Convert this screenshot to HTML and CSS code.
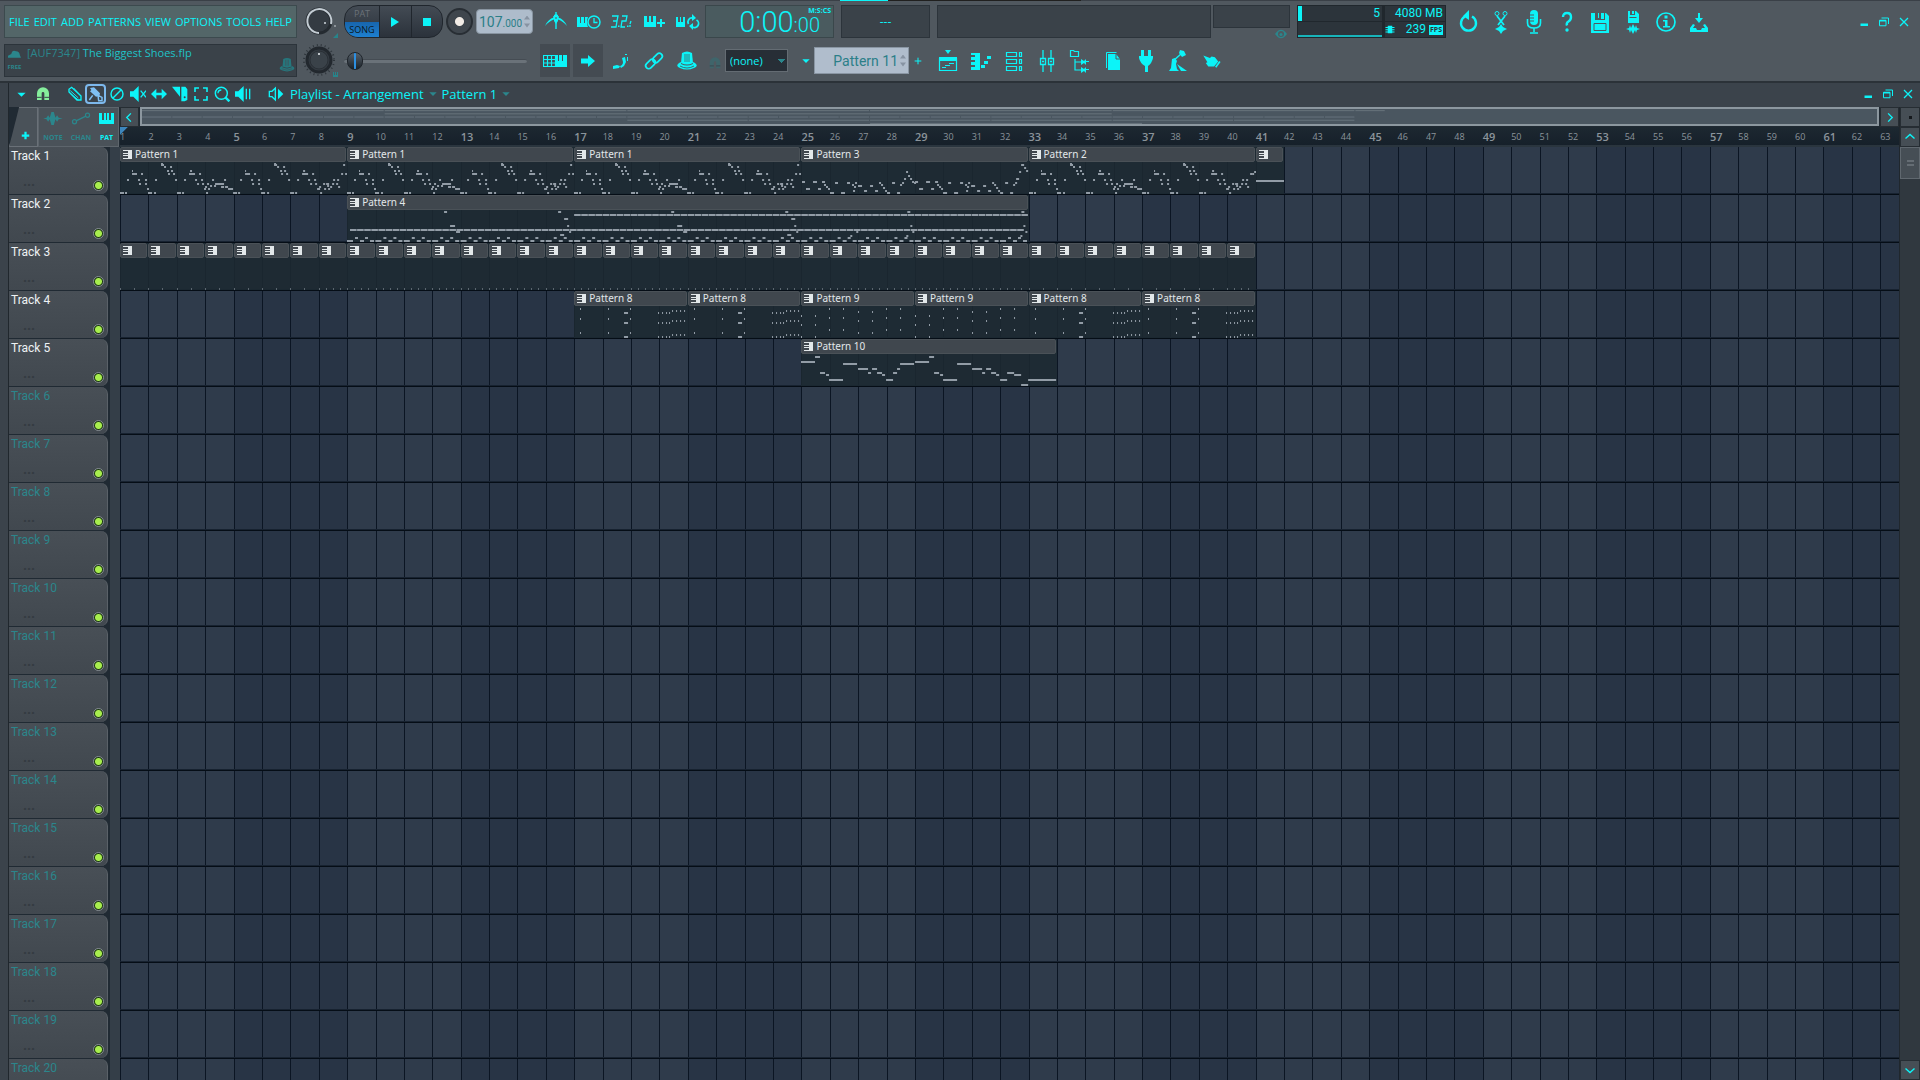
FILE: index.html
```html
<!DOCTYPE html>
<html lang="en">
<head>
  <meta charset="UTF-8">
  <meta name="viewport" content="width=device-width, initial-scale=1.0">
  <title>The Biggest Shoes.flp</title>
  <link rel="stylesheet" href="styles.css">
</head>
<body>
  <svg class="sprite" aria-hidden="true">
    <symbol id="i-metronome" viewBox="0 0 24 24"><path d="M1 16Q4 9 10 7.500V9.500Q5 11 1 16ZM23 16Q20 9 14 7.500V9.500Q19 11 23 16Z"/><path d="M10 5l2-1 2 1v6l-2 3-2-3z"/><path d="M12 12v7M9 7h6M12 2v3" stroke="currentColor" stroke-width="1.400"/><path d="M12 7v2" stroke="#50585f"/></symbol>
    <symbol id="i-wait" viewBox="0 0 24 24"><path d="M0 7h3v6h1V7h3v6h1V7h3q-2 5 0 10H0z"/><circle cx="17" cy="12" r="6" fill="none" stroke="currentColor" stroke-width="1.500"/><path d="M17 8v4.500h3.500" fill="none" stroke="currentColor" stroke-width="1.300"/></symbol>
    <symbol id="i-count" viewBox="0 0 24 24"><path d="M2 6h6l-1 5H3M7 11l-1 6H1M12 6h5l-1 5h-4l-1 6h4M21 11l-1 3M20 15l0 2" fill="none" stroke="currentColor" stroke-width="1.300"/><path d="M8 15.500h1.500V17H8zM17 15.500h1.500V17H17z"/></symbol>
    <symbol id="i-keysplus" viewBox="0 0 24 24"><path d="M1 6h3v6h2V6h2v6h2V6h3v11H1zM17 9h2v3h3v2h-3v3h-2v-3h-3v-2h3z"/></symbol>
    <symbol id="i-keysloop" viewBox="0 0 24 24"><path d="M0 7h2v5h2V7h1v5h2V7h2v10H0z"/><path d="M12.500 14a4 4 0 0 1 4-6M20.500 10a4 4 0 0 1-4 7" fill="none" stroke="currentColor" stroke-width="1.800"/><path d="M16 4l4 4-4 3zM17 20l-4-4 4-3z"/></symbol>
    <symbol id="i-pianogrid" viewBox="0 0 24 24"><path d="M.500 6.500h12v11H.500zM.500 10.500h12M.500 14h12M4.500 6v12M8.500 6v12" fill="none" stroke="currentColor" stroke-width="1.200"/><path d="M12 6h3v6h1V6h3v6h1V6h4v12H12z"/></symbol>
    <symbol id="i-arrow" viewBox="0 0 24 24"><path d="M5 9.500h7V6l7 6-7 6v-3.500H5z"/></symbol>
    <symbol id="i-step" viewBox="0 0 24 24"><path d="M4 17l4-1 3 1-1 2-6 1zM11 17q3-1 3-4l-1-4 3-1 1 5-2 4-3 2zM16 5h2v1h-2zM18 8h1v4h-1z"/></symbol>
    <symbol id="i-link" viewBox="0 0 24 24"><g fill="none" stroke="currentColor" stroke-width="1.700"><rect x="10" y="6" width="11" height="6" rx="3" transform="rotate(-45 15.500 9)"/><rect x="3" y="12" width="11" height="6" rx="3" transform="rotate(-45 8.500 15)"/></g></symbol>
    <symbol id="i-pot" viewBox="0 0 24 24"><path d="M7 4q5-3 10 0l1 10q-6 3-12 0z"/><path d="M10 5v8M12 5v8M14 5v8" stroke="#454d54" stroke-width=".700"/><path d="M4 14l2-1v2q6 3 12 0v-2l2 1q4 3-1 5-7 3-14 0-5-2-1-5z"/><path d="M5 17q7 4 14 0" fill="none" stroke="#454d54" stroke-width=".800"/></symbol>
    <symbol id="i-magnet" viewBox="0 0 24 24"><path d="M3 21V11a9 9 0 0 1 18 0v10h-7V11a2 2 0 0 0-4 0v10z"/><path d="M3 17h7M14 17h7" stroke="#3b434b" stroke-width="1.500"/></symbol>
    <symbol id="i-caret" viewBox="0 0 24 24"><path d="M1 7h22L12 18z"/></symbol>
    <symbol id="i-plus" viewBox="0 0 24 24"><path d="M2 12h20M12 2v20" stroke="currentColor" stroke-width="3"/></symbol>
    <symbol id="i-plusb" viewBox="0 0 24 24"><path d="M2 12h20M12 2v20" stroke="currentColor" stroke-width="6"/></symbol>
    <symbol id="i-playlist" viewBox="0 0 24 24"><path d="M9 1h6l-3 4z"/><path d="M3 8h18v4H3z"/><path d="M3.500 9v12.500h17V9M6 18.500h4M9 16.500h5M13 14.500h5" fill="none" stroke="currentColor" stroke-width="1.200"/></symbol>
    <symbol id="i-pianoroll" viewBox="0 0 24 24"><path d="M2 4h9v17H2v-3h4v-2H2v-3h4v-2H2V8h4V6H2zM12 16h4v3h-4zM15 12h4v3h-4zM18 7h4v3h-4z"/></symbol>
    <symbol id="i-rack" viewBox="0 0 24 24"><path d="M4.500 3.500h10v4h-10zM17.500 3.500h2v4h-2zM4.500 10.500h10v4h-10zM17.500 10.500h2v4h-2zM4.500 17.500h10v4h-10zM17.500 17.500h2v4h-2z" fill="none" stroke="currentColor" stroke-width="1.200"/></symbol>
    <symbol id="i-mixer" viewBox="0 0 24 24"><path d="M5.500 9.500h5v6h-5zM13.500 9.500h5v6h-5zM8 1v8M16 1v8M8 16v7M16 16v7M7 12.500h2M15 12.500h2" fill="none" stroke="currentColor" stroke-width="1.300"/></symbol>
    <symbol id="i-browser" viewBox="0 0 24 24"><path d="M2.500 1.500h3l1 1h4v5h-8zM7 10v11h6M7 13h6" fill="none" stroke="currentColor" stroke-width="1.200"/><path d="M13 10l3 2 2-2v2h3v1h-3v3l-2-2-3 2zM13 18l3 2 2-2v2h3v1h-3v3l-2-2-3 2z"/></symbol>
    <symbol id="i-picker" viewBox="0 0 24 24"><path d="M7 5h8l4 5v11H7z"/><path d="M5.500 19V3.500h10" fill="none" stroke="currentColor"/><path d="M15 5v5h4" fill="none" stroke="#50585f"/></symbol>
    <symbol id="i-plug" viewBox="0 0 24 24"><path d="M7 1h3v6H7zM14 1h3v6h-3zM5 7h14v2q-1 5-5 8v6h-3v-6q-5-3-6-8z"/></symbol>
    <symbol id="i-jack" viewBox="0 0 24 24"><path d="M13 1l4 1 2 4-4 2-3-4zM5 10l3-1 2 3-1 3 1 5 2 2H2l2-3zM10 15l10 7h-6z"/><path d="M14 5l-8 7" stroke="currentColor" stroke-width="1.500"/></symbol>
    <symbol id="i-hand" viewBox="-2 -3 29 29"><path d="M2 5l8 3 2-2 4 1 4 5-5 6-7 0-3-4 2-1z"/><path d="M22 12l-5 7" stroke="currentColor" stroke-width="2"/></symbol>
    <symbol id="i-undo" viewBox="0 0 24 24"><path d="M16 6.500a7.500 7.500 0 1 1-7 0" fill="none" stroke="currentColor" stroke-width="2.400"/><path d="M13 0v10L7 6z"/></symbol>
    <symbol id="i-cut" viewBox="0 0 24 24"><path d="M8 6l7 9M16 6l-7 9" stroke="currentColor" stroke-width="1.800"/><circle cx="8" cy="3.500" r="2" fill="none" stroke="currentColor"/><circle cx="16" cy="3.500" r="2" fill="none" stroke="currentColor"/><path d="M6 19l2-1 2-1 2-3 2 3 2 1 2 1-2 1-2 1-2 3-2-3-2-1z"/></symbol>
    <symbol id="i-mic" viewBox="0 0 24 24"><rect x="8" y="0" width="8" height="15" rx="4"/><path d="M8 5h4M8 8h4M8 11h4" stroke="#50585f"/><path d="M5.500 9v4q0 5 6.500 5t6.500-5V9M12 18v4M8 23h8" fill="none" stroke="currentColor" stroke-width="1.600"/></symbol>
    <symbol id="i-help" viewBox="0 0 24 24"><path d="M8 7q0-4 4-4t4 4q0 3-2.500 4.500t-1.500 4" fill="none" stroke="currentColor" stroke-width="2.400"/><circle cx="12" cy="20" r="1.700"/></symbol>
    <symbol id="i-save" viewBox="0 0 24 24"><path d="M3 3h4v7h10V3h1l3 3v17H3z"/><path d="M13 3h3v6h-3zM10 3h1v5h-1z"/><path d="M6 13.500h12v7H6z" fill="none" stroke="#50585f"/></symbol>
    <symbol id="i-savenew" viewBox="0 0 24 24"><path d="M7 1h2v4h5V1h1l3 3v9H7zM11 1h2v3h-2z"/><path d="M8.500 7.500h7" stroke="#50585f"/><path d="M5 19l3-1 1-3 1 3 2-4 2 4 1-3 1 3 3 1-3 1-1 3-1-3-2 4-2-4-1 3-1-3z"/></symbol>
    <symbol id="i-info" viewBox="0 0 24 24"><circle cx="12" cy="12" r="9" fill="none" stroke="currentColor" stroke-width="1.700"/><path d="M10.500 5.500h3v3h-3zM9 10h4.500v6H16v1.500H9V16h2v-4.500H9z"/></symbol>
    <symbol id="i-export" viewBox="0 0 24 24"><path d="M11 3h2v5h3l-4 5-4-5h3zM6 14l-3 4v4h18v-4l-3-4-2 1 2 3h-3l-1 2h-4l-1-2H6l2-3z"/></symbol>
    <symbol id="i-min" viewBox="0 0 24 24"><path d="M5 15h15v5H5z"/></symbol>
    <symbol id="i-restore" viewBox="0 0 24 24"><path d="M3 8.500h13v11H3zM7 4h14v12" fill="none" stroke="currentColor" stroke-width="2"/><path d="M3 8h13v3H3z"/></symbol>
    <symbol id="i-close" viewBox="0 0 24 24"><path d="M4 4l16 16M20 4L4 20" stroke="currentColor" stroke-width="2.500"/></symbol>
    <symbol id="i-eye" viewBox="0 0 24 24"><path d="M0 12Q12-5 24 12 12 29 0 12z"/><circle cx="12" cy="12" r="6" fill="#50585f"/><circle cx="12" cy="13" r="3"/></symbol>
    <symbol id="i-cloud" viewBox="0 0 24 24"><path d="M0 20v-4l6-3q2-9 9-5 6 0 7 7l2 5z"/></symbol>
    <symbol id="i-pencil" viewBox="0 0 24 24"><path d="M3 5l4-3 14 13v6h-6L3 9z" fill="none" stroke="currentColor" stroke-width="2"/><path d="M6 12L17 21M10 3l11 12M5 7l12 11" stroke="currentColor" stroke-width="1.400"/></symbol>
    <symbol id="i-brush" viewBox="0 0 24 24"><path d="M3 3l6-1 9 9-1 4-5 1-9-8 2-2z"/><path d="M2 21l5-7M15 14l6 3v5h-5z" fill="none" stroke="currentColor" stroke-width="2.200"/></symbol>
    <symbol id="i-no" viewBox="0 0 24 24"><circle cx="12" cy="12" r="9" fill="none" stroke="currentColor" stroke-width="2.200"/><path d="M18 6L6 18" stroke="currentColor" stroke-width="2.200"/></symbol>
    <symbol id="i-mute" viewBox="0 0 24 24"><path d="M0 8h5l8-8v24l-8-8H0z"/><path d="M16 7l8 10M24 7l-8 10" stroke="currentColor" stroke-width="2"/></symbol>
    <symbol id="i-slip" viewBox="0 0 24 24"><path d="M0 12l8-8v6h8V4l8 8-8 8v-6H8v6z"/></symbol>
    <symbol id="i-slice" viewBox="0 0 24 24"><path d="M0 1h12v15zM14 1h6l3 4v16l-4 2h-5z"/><circle cx="19" cy="17" r="1.500" fill="#3b434b"/></symbol>
    <symbol id="i-select" viewBox="0 0 24 24"><path d="M3 9V3h6M15 3h6v6M21 15v6h-6M9 21H3v-6" fill="none" stroke="currentColor" stroke-width="2.400"/></symbol>
    <symbol id="i-zoom" viewBox="0 0 24 24"><circle cx="11" cy="11" r="9" fill="none" stroke="currentColor" stroke-width="2.200"/><path d="M17 17l6 6" stroke="currentColor" stroke-width="3.500"/><path d="M6 11a5 5 0 0 1 5-5" fill="none" stroke="currentColor" stroke-width="2"/></symbol>
    <symbol id="i-play-sel" viewBox="0 0 24 24"><path d="M0 8h5l8-8v24l-8-8H0zM16 4h2v16h-2zM21 4h2v16h-2z"/></symbol>
    <symbol id="i-speaker" viewBox="0 0 24 24"><path d="M2 8h4l5-5v18l-5-5H2z" fill="none" stroke="currentColor" stroke-width="2"/><path d="M15 4l8 8-8 8z"/></symbol>
    <symbol id="i-wave" viewBox="0 0 24 16"><path d="M0 8l4-1 2-3 2 3 2-7h3l2 7 2-3 2 3 5 1-5 1-2 3-2-3-2 7h-3l-2-7-2 3-2-3z"/></symbol>
    <symbol id="i-auto" viewBox="0 0 24 16"><path d="M6 11l12-6" stroke="currentColor" stroke-width="1.600"/><circle cx="4" cy="12" r="2.500" fill="none" stroke="currentColor" stroke-width="1.500"/><circle cx="20" cy="4" r="2.500" fill="none" stroke="currentColor" stroke-width="1.500"/></symbol>
    <symbol id="i-keys" viewBox="0 0 15 11"><path d="M0 0h3v7h2V0h2v7h1V0h2v7h2V0h3v11H0z"/></symbol>
    <symbol id="i-chip" viewBox="0 0 24 24"><path d="M6 2h12v20H6zM0 5h24v3H0zM0 11h24v3H0zM0 17h24v3H0z"/></symbol>
    <symbol id="i-left" viewBox="0 0 24 24"><path d="M15 3l-9 9 9 9" fill="none" stroke="currentColor" stroke-width="3"/></symbol>
    <symbol id="i-right" viewBox="0 0 24 24"><path d="M9 3l9 9-9 9" fill="none" stroke="currentColor" stroke-width="3"/></symbol>
    <symbol id="i-up" viewBox="0 0 24 24"><path d="M3 15l9-8 9 8" fill="none" stroke="currentColor" stroke-width="2.800"/></symbol>
    <symbol id="i-down" viewBox="0 0 24 24"><path d="M3 9l9 8 9-8" fill="none" stroke="currentColor" stroke-width="2.800"/></symbol>
    <symbol id="i-clip" viewBox="0 0 9 9"><path d="M0 0h9v9H0V8h5V6H0V5h5V4H0V3h5V1H0z"/></symbol>
  </svg>

  <header class="toolbar">
    <div class="row">
      <nav class="menu">
        <a href="#">FILE</a><a href="#">EDIT</a><a href="#">ADD</a><a href="#">PATTERNS</a><a href="#">VIEW</a><a href="#">OPTIONS</a><a href="#">TOOLS</a><a href="#">HELP</a>
      </nav>
      <svg class="knob" viewBox="0 0 38 33" aria-label="Main volume">
        <circle cx="18" cy="16" r="12" fill="#343b42" stroke="#252b31" stroke-width="3"/>
        <path d="M18 28a12 12 0 1 1 12-9" fill="none" stroke="#c3ccd3" stroke-width="2"/>
        <rect x="23" y="17" width="2" height="2" fill="#a8b0b6"/><path d="M32 33h5v-5z" fill="#27858b"/><rect x="33" y="20" width="2" height="2" fill="#8b9298"/>
      </svg>
      <div class="transport">
        <div class="mode">
          <button type="button">PAT</button>
          <button type="button" class="on">SONG</button>
        </div>
        <button type="button" aria-label="Play"><svg viewBox="0 0 10 10"><path d="M1 0l8 5-8 5z"/></svg></button>
        <button type="button" aria-label="Stop"><svg viewBox="0 0 10 10"><path d="M1 1h8v8H1z"/></svg></button>
      </div>
      <button type="button" class="record" aria-label="Record"></button>
      <button type="button" class="tempo" aria-label="Tempo">107<small>.000</small><span class="spin"></span></button>
      <div class="icons icons-a" data-icons="metronome wait count keysplus keysloop"></div>
      <div class="clock"><output>0:00<small>:00</small></output><span>M:S:CS</span></div>
      <div class="panel panel-a">---</div>
      <div class="panel panel-b"></div>
      <div class="scope"><div class="panel"></div><svg><use href="#i-eye"/></svg></div>
      <div class="cpu">
        <div class="load"><i></i><span>5</span></div>
        <div class="mem">4080 MB</div>
        <div class="graph"></div>
        <div class="fps"><svg><use href="#i-chip"/></svg><span>239</span><b>FPS</b></div>
      </div>
      <div class="icons icons-b" data-icons="undo cut mic help save savenew info export"></div>
      <div class="win" data-icons="min restore close"></div>
    </div>
    <div class="row">
      <div class="hint">
        <div class="cloud"><svg><use href="#i-cloud"/></svg><small>FREE</small></div>
        <p><span>[AUF7347]</span> The Biggest Shoes.flp</p>
        <svg class="hat"><use href="#i-pot"/></svg>
      </div>
      <svg class="knob" viewBox="0 0 38 33" aria-label="Main pitch">
        <circle cx="18" cy="16" r="15" fill="none" stroke="#2e353b" stroke-width="2" stroke-dasharray="1 3"/>
        <circle cx="18" cy="16" r="12" fill="#343b42" stroke="#22282e" stroke-width="3"/>
        <circle cx="18" cy="16" r="9" fill="#3a4249" stroke="#2a3036"/><rect x="17" y="9" width="2" height="2" fill="#c0c6ca"/><path d="M32 28h1v3h1v-3h1v3h1v-3h1v5h-5z" fill="#27858b"/>
      </svg>
      <input class="pitch" type="range" min="0" max="100" value="0" aria-label="Song position">
      <div class="toggles" data-icons="pianogrid arrow"></div>
      <div class="icons icons-c" data-icons="step link pot"></div>
      <svg class="snap-icon"><use href="#i-magnet"/></svg>
      <select class="snap" aria-label="Snap"><option>(none)</option></select>
      <button type="button" class="tiny pat-menu" aria-label="Pattern menu"><svg><use href="#i-caret"/></svg></button>
      <div class="pattern"><input type="text" value="Pattern 11" aria-label="Pattern"><span class="spin"></span></div>
      <button type="button" class="tiny" aria-label="Add pattern"><svg><use href="#i-plus"/></svg></button>
      <div class="icons icons-d" data-icons="playlist pianoroll rack mixer browser picker plug jack hand"></div>
    </div>
  </header>

  <main class="window">
    <div class="titlebar">
      <button type="button" class="tool caret" aria-label="Menu"><svg><use href="#i-caret"/></svg></button>
      <button type="button" class="tool magnet" aria-label="Snap"><svg><use href="#i-magnet"/></svg></button>
      <div class="tools" data-icons="pencil brush no mute slip slice select zoom play-sel"></div>
      <button type="button" class="tool" aria-label="Preview"><svg><use href="#i-speaker"/></svg></button>
      <h1>Playlist - Arrangement <svg><use href="#i-caret"/></svg> Pattern 1 <svg><use href="#i-caret"/></svg></h1>
      <div class="win" data-icons="min restore close"></div>
    </div>

    <div class="playlist">
      <div class="corner">
        <button type="button" class="add" aria-label="Add track"><svg><use href="#i-plusb"/></svg></button>
        <div class="picker">
          <button type="button"><svg><use href="#i-wave"/></svg>NOTE</button>
          <button type="button"><svg><use href="#i-auto"/></svg>CHAN</button>
          <button type="button" class="on"><svg><use href="#i-keys"/></svg>PAT</button>
        </div>
      </div>
      <div class="timeline">
        <div class="hscroll">
          <button type="button" class="sbtn" aria-label="Scroll left"><svg><use href="#i-left"/></svg></button>
          <svg class="overview" id="overview" viewBox="0 0 1733 14" preserveAspectRatio="none"></svg>
          <button type="button" class="sbtn" aria-label="Scroll right"><svg><use href="#i-right"/></svg></button>
        </div>
        <div class="ruler" id="ruler"></div>
      </div>
      <ul class="heads" id="heads"></ul>
      <div class="lanes" id="lanes"><div class="bars" id="bars"></div></div>
      <div class="vscroll">
        <span class="sbtn dot"></span>
        <button type="button" class="sbtn" aria-label="Scroll up"><svg><use href="#i-up"/></svg></button>
        <div class="well"><div class="thumb"></div></div>
        <button type="button" class="sbtn" aria-label="Scroll down"><svg><use href="#i-down"/></svg></button>
      </div>
    </div>
  </main>
  <script src="playlist.js"></script>
</body>
</html>
```

FILE: styles.css
```css
:root {
  --cyan: #0cf4f8;
  --teal: #2b868c;
  --panel: #3a4249;
  --edge: #2c343b;
  --bars: 62.66;
}
* {
  box-sizing: border-box;
}
body {
  margin: 0;
  height: 100vh;
  overflow: hidden;
  display: flex;
  flex-direction: column;
  background: #3b434b;
  color: var(--cyan);
  font-family: "Open Sans", "Noto Sans", sans-serif;
  font-size: 12px;
}
button, input, select {
  font: inherit;
  color: inherit;
  background: none;
  border: 0;
  padding: 0;
  margin: 0;
}
svg {
  fill: currentColor;
  display: block;
}
.sprite {
  position: absolute;
  width: 0;
  height: 0;
}

/* main toolbar */
.toolbar {
  flex: none;
  display: flex;
  flex-direction: column;
  gap: 6px;
  height: 83px;
  padding: 5px 6px 0 4px;
  background:
    linear-gradient(var(--cyan), var(--cyan)) 840px 0 / 48px 1px no-repeat,
    linear-gradient(#20201f, #20201f) 888px 0 / 193px 1px no-repeat,
    linear-gradient(#3a4047, #3a4047) 0 0 / 100% 1px no-repeat,
    #50585f;
  border-bottom: 2px solid #2b3238;
}
.row {
  display: flex;
  height: 33px;
}
.row > * {
  flex: none;
}
.menu {
  width: 293px;
  display: flex;
  justify-content: space-between;
  align-items: center;
  padding: 0 4px;
  background: #536668;
  border: 1px solid #3c4a4e;
}
.menu a {
  color: var(--cyan);
  text-decoration: none;
  font-family: "Open Sans", sans-serif;
  font-size: 11px;
}
.knob {
  width: 38px;
  height: 33px;
  margin-left: 4px;
}
.transport {
  display: flex;
  width: 99px;
  margin-left: 5px;
  border: 1px solid #20262d;
  border-radius: 14px;
  overflow: hidden;
  background: linear-gradient(#434b54, #2b323b);
}
.transport > button {
  flex: 1;
  border-left: 1px solid #20262d;
  display: grid;
  place-items: center;
}
.transport svg {
  width: 10px;
  height: 10px;
}
.mode {
  width: 34px;
  display: flex;
  flex-direction: column;
}
.mode button {
  flex: 1;
  font-size: 9px;
  line-height: 15px;
  color: #6a7178;
}
.mode .on {
  background: linear-gradient(#1765ad, #1e80d0);
  color: #0c1720;
}
.record {
  width: 27px;
  height: 27px;
  margin: 3px 0 0 3px;
  border-radius: 50%;
  border: 2px solid #282e34;
  background: radial-gradient(#f2ece6 0 4px, #3f464d 5px);
}
.tempo {
  display: flex;
  align-items: center;
  justify-content: flex-end;
  width: 57px;
  height: 25px;
  margin: 4px 0 0 3px;
  padding-right: 2px;
  border-radius: 4px;
  background: #aebccb;
  border: 1px solid #8894a0;
  color: #2b7f88;
  font-family: Roboto, sans-serif;
  font-size: 14px;
}
.tempo small {
  font-size: 10px;
  padding-top: 4px;
}
.spin {
  width: 6px;
  height: 12px;
  margin-left: 2px;
  background: #8793a2;
  clip-path: polygon(50% 0, 100% 33%, 50% 33%, 50% 67%, 100% 67%, 50% 100%, 0 67%, 50% 67%, 50% 33%, 0 33%);
}
.icons {
  display: flex;
}
.icons button {
  width: 33px;
  display: grid;
  place-items: center;
}
.icons svg {
  width: 24px;
  height: 24px;
}
.icons-a {
  margin-left: 6px;
}
.icons-b {
  margin-left: 5px;
}
.icons-c {
  margin-left: 1px;
}
.icons-d {
  margin-left: 5px;
}
.clock {
  position: relative;
  width: 129px;
  margin-left: 1px;
  padding-right: 13px;
  background: #4a5b5f;
  border: 1px solid #3a474b;
  font-family: Roboto, sans-serif;
  text-align: right;
}
.clock output {
  font-size: 29px;
  font-weight: 300;
  line-height: 32px;
}
.clock small {
  font-size: 20px;
}
.clock span {
  position: absolute;
  top: 0;
  right: 2px;
  font: 700 7px/9px "Open Sans", sans-serif;
}
.panel {
  display: grid;
  place-items: center;
  background: var(--panel);
  border: 1px solid var(--edge);
}
.panel-a {
  width: 89px;
  margin-left: 7px;
}
.panel-b {
  width: 274px;
  margin-left: 7px;
}
.scope {
  width: 77px;
  margin-left: 2px;
}
.scope .panel {
  height: 23px;
}
.scope svg {
  width: 12px;
  height: 12px;
  margin-left: auto;
  margin-right: 3px;
  color: var(--teal);
}
.cpu {
  display: grid;
  grid-template: 15px 15px / 84px 60px;
  gap: 1px 3px;
  width: 149px;
  margin-left: 7px;
  padding: 1px;
  background: #20272d;
  font-family: Roboto, sans-serif;
  font-size: 12px;
  line-height: 15px;
}
.cpu > div {
  background: #2c343b;
}
.load {
  display: flex;
  justify-content: space-between;
  padding-right: 2px;
}
.load i {
  width: 4px;
  background: var(--cyan);
}
.graph {
  border-bottom: 2px solid #18b4ba;
}
.mem {
  text-align: right;
  padding-right: 2px;
}
.fps {
  display: flex;
  justify-content: flex-end;
  align-items: center;
  gap: 3px;
  padding-right: 2px;
}
.fps svg {
  width: 10px;
  height: 9px;
  margin-right: auto;
}
.fps b {
  padding: 0 1px;
  background: var(--cyan);
  color: #2c343b;
  font: 700 7px/10px "Open Sans", sans-serif;
}
.win {
  display: flex;
  margin-left: auto;
}
.win button {
  width: 20px;
  display: grid;
  place-items: center;
}
.win svg {
  width: 12px;
  height: 12px;
}
.hint {
  width: 293px;
  display: flex;
  gap: 3px;
  background: var(--panel);
  border: 1px solid var(--edge);
}
.cloud {
  width: 19px;
  color: var(--teal);
  text-align: center;
}
.cloud svg {
  width: 13px;
  height: 13px;
  margin: 2px auto 0;
}
.cloud small {
  display: block;
  font: 700 6px/14px "Open Sans", sans-serif;
}
.hint p {
  margin: 0;
  flex: 1;
  line-height: 16px;
  font-size: 11px;
  color: #1fc3c8;
}
.hint p span {
  color: var(--teal);
}
.hat {
  width: 18px;
  height: 18px;
  margin-top: 11px;
  color: #25777d;
}
.pitch {
  appearance: none;
  width: 183px;
  margin: 0 4px 0 5px;
}
.pitch::-webkit-slider-runnable-track {
  height: 4px;
  background: #6a7279;
  border-top: 1px solid #454c53;
  border-radius: 2px;
}
.pitch::-webkit-slider-thumb {
  appearance: none;
  width: 16px;
  height: 18px;
  margin: -8px 0 0 3px;
  border-radius: 8px;
  border: 1px solid #1f252b;
  background: linear-gradient(90deg, transparent 6px, #2d8fe0 6px 8px, transparent 8px), linear-gradient(#56606a, #1b2228);
}
.toggles {
  display: flex;
  gap: 3px;
  margin-left: 9px;
}
.toggles button {
  width: 30px;
  background: #444b52;
  display: grid;
  place-items: center;
}
.toggles svg {
  width: 24px;
  height: 24px;
}
.snap-icon {
  width: 14px;
  height: 14px;
  margin: 12px 3px 0 5px;
  color: #3f656b;
}
.snap {
  appearance: none;
  width: 63px;
  height: 23px;
  margin-top: 5px;
  padding-left: 4px;
  border: 1px solid #1c2228;
  outline: 1px solid #646c73;
  outline-offset: -1px;
  font-size: 11px;
  background: conic-gradient(from -45deg at 50% 100%, var(--teal) 90deg, transparent 0) 51px 9px / 8px 4px no-repeat, #272e36;
}
.tiny {
  width: 17px;
  display: grid;
  place-items: center;
}
.tiny svg {
  width: 8px;
  height: 8px;
}
.pat-menu {
  margin-left: 9px;
}
.pattern {
  display: flex;
  align-items: center;
  width: 95px;
  height: 27px;
  margin-top: 3px;
  padding-right: 2px;
  background: #b0bdcc;
  border: 1px solid #8a96a3;
  color: #2b7f88;
}
.pattern input {
  flex: 1;
  min-width: 0;
  text-align: right;
  font-family: Roboto, sans-serif;
  font-size: 14px;
}

/* playlist window */
.window {
  flex: 1;
  min-height: 0;
  display: flex;
  flex-direction: column;
  margin-left: 8px;
  border-left: 1px solid #20272d;
}
.titlebar {
  flex: none;
  display: flex;
  height: 24px;
  padding: 0 2px 2px 0;
}
.tool, .tools button {
  width: 21px;
  display: grid;
  place-items: center;
}
.tool svg, .tools svg {
  width: 16px;
  height: 16px;
}
.titlebar .caret svg {
  width: 9px;
  height: 9px;
}
.caret {
  margin-left: 2px;
}
.titlebar .magnet {
  color: #85ee9c;
  margin-right: 11px;
}
.tools {
  display: flex;
  margin-right: 12px;
}
.tools button:nth-child(2) {
  border: 2px solid #7db8ec;
  border-radius: 4px;
  margin: 1px 0;
  color: #7fc0f4;
}
.titlebar h1 {
  display: flex;
  align-items: center;
  gap: 5px;
  margin: 0 0 0 4px;
  font-size: 13px;
  font-weight: 400;
}
.titlebar h1 svg {
  width: 8px;
  height: 8px;
  color: var(--teal);
}
.playlist {
  flex: 1;
  min-height: 0;
  display: grid;
  grid-template: 40px 1fr / 111px 1fr 21px;
  background: #202a33;
}
.corner {
  display: flex;
  padding-right: 1px;
}
.add {
  width: 29px;
  padding: 16px 0 0 4px;
  background: #4a5259;
  border: 1px solid #6a7178;
  clip-path: polygon(35% 0, 100% 0, 100% 100%, 0 100%);
}
.add svg {
  width: 9px;
  height: 9px;
  margin: auto;
}
.picker {
  flex: 1;
  display: flex;
  justify-content: space-around;
  background: #4a5259;
  border: 1px solid #5d656c;
}
.picker button {
  color: var(--teal);
  font-size: 7px;
  font-weight: 700;
  line-height: 10px;
}
.picker svg {
  width: 20px;
  height: 13px;
  margin: 0 auto 8px;
}
.picker .on {
  color: var(--cyan);
}
.picker .on svg {
  width: 15px;
}
.timeline {
  display: flex;
  flex-direction: column;
  min-width: 0;
}
.hscroll {
  display: flex;
  gap: 1px;
  height: 20px;
}
.sbtn {
  flex: none;
  width: 19px;
  height: 20px;
  display: grid;
  place-items: center;
  background: #464e55;
  border: 1px solid #60686f;
  outline: 1px solid #262d33;
  outline-offset: -1px;
}
.sbtn svg {
  width: 11px;
  height: 11px;
}
.vscroll .sbtn svg {
  width: 12px;
  height: 12px;
}
.overview {
  flex: 1;
  min-width: 0;
  height: 19px;
  background: #4a5660;
  border: 2px solid #8c979f;
}
.ruler {
  flex: 1;
  display: flex;
  overflow: hidden;
  background: linear-gradient(#1d2831, #16202a 90%, #2a353e 90%);
}
.ruler span {
  flex: 0 0 calc(100% / var(--bars));
  font-size: 9px;
  line-height: 20px;
  color: #8b949b;
}
.ruler .major {
  font-size: 11px;
  font-weight: 600;
}
.ruler span:first-child {
  background: linear-gradient(135deg, #3d86bd 5px, transparent 6px) no-repeat;
}
.heads {
  min-height: 0;
  overflow: hidden;
  margin: 0;
  padding: 0;
  list-style: none;
  border-right: 10px solid #343e48;
}
.heads li {
  display: grid;
  grid-template: 20px 1fr / 1fr auto;
  height: 47px;
  width: 99px;
  margin-bottom: 1px;
  padding: 1px 1px 0 2px;
  border-radius: 0 7px 7px 0;
  background: linear-gradient(#484f56, #41484f);
  border-right: 1px solid #5a6168;
  font-family: Roboto, sans-serif;
  font-size: 12px;
  line-height: 17px;
  color: var(--teal);
}
.heads .used {
  color: #eef2f4;
}
.heads span {
  grid-column: 1 / 3;
}
.heads small {
  padding-left: 12px;
  font-size: 14px;
  font-weight: 700;
  line-height: 26px;
  color: #343b41;
}
.led {
  width: 11px;
  height: 11px;
  margin: 12px 2px 0 0;
  border-radius: 50%;
  border: 1px solid #858c91;
  background: radial-gradient(#a8ee4e 3px, #1c3a10 4px);
}
.lanes {
  position: relative;
  min-width: 0;
  min-height: 0;
  overflow: hidden;
}
.bars {
  position: absolute;
  inset: 0;
  display: flex;
}
.bars i {
  flex: 0 0 calc(100% / var(--bars));
  background: #2f3b4b;
  border-left: 1px solid #0b1523;
}
.bars .alt {
  background: #283445;
}
.lane {
  position: relative;
  height: 48px;
  border-bottom: 1px solid #050d16;
  box-shadow: inset 0 -1px #172230;
}
.clip {
  position: absolute;
  top: 0;
  height: 47px;
  overflow: hidden;
  background: rgba(29, 41, 49, .88);
}
.clip header {
  display: flex;
  align-items: center;
  gap: 3px;
  height: 15px;
  margin-right: 1px;
  padding-left: 2px;
  border-radius: 2px;
  border: 1px solid #4a5157;
  background: #40474e;
  color: #e3e8ea;
  font-family: "Noto Sans", sans-serif;
  font-size: 10px;
  line-height: 13px;
}
.clip header svg {
  width: 9px;
  height: 9px;
}
.notes {
  width: 100%;
  height: 32px;
  color: #929ca6;
}
.notes.faint {
  color: #5c6770;
}
.vscroll {
  grid-column: 3;
  grid-row: 1 / 3;
  display: flex;
  flex-direction: column;
  border-left: 1px solid #20272d;
}
.vscroll .sbtn {
  width: auto;
}
.dot::after {
  content: "";
  width: 3px;
  height: 3px;
  background: #15191d;
}
.well {
  flex: 1;
  background: #30383f;
}
.thumb {
  height: 32px;
  background: linear-gradient(transparent 13px, #656d74 13px 15px, transparent 15px 17px, #656d74 17px 19px, transparent 19px) center / 7px 32px no-repeat, #464e55;
  border: 1px solid #60686f;
}
```

FILE: playlist.js
```js
const BARS = 62.66;     // bars visible in the window
const BAR_W = 28.375;   // note units per bar

// icon strips
document.querySelectorAll('[data-icons]').forEach(el => {
  el.innerHTML = el.dataset.icons.split(' ').map(n =>
    `<button type="button" aria-label="${n}"><svg><use href="#i-${n}"/></svg></button>`).join('');
});

// notes are [x, y, width, height]
const shift = (notes, dx) => notes.map(([x, y, w, h]) => [x + dx, y, w, h]);

const arp = [
  [0,30,4],[5,30,2],[7,17],[12,8,1],[12,11,5],[21,11],[18,17],[25,17],[19,21],[25,21],[27,26],
  [28,30,4],[34,30,2],[35,17],[41,2,3],[41,1,2],[44,4],[50,4],[47,8],[51,8],[48,11],[53,11],[55,17],
  [57,30,4],[62,30,2],[64,17],[70,8],[69,11,6],[79,11],[75,17],[81,17],[77,21],[82,21],[84,26]
];
const fall = [[85,24],[87,21],[86,30],[90,23],[88,26],[94,23],[92,17],[104,17],[95,21,9],[101,24,3],[105,24,3],[108,26,5]];
const rise = [[198,26],[199,24],[200,30],[203,21],[204,26],[207,23],[206,21,3],[208,26],[212,21],[210,24],[213,17],[217,17],[216,21],[218,24],[221,11]];
const melody = [...arp, ...fall, ...shift(arp, 113), ...rise];

const three = [
  [1,19,3],[5,26,4],[12,19,4],[17,26,3],[21,19,3],[23,22],[25,24],[27,26],[29,30,4],[34,20,3],[40,30,4],[46,20,3],
  [51,22],[52,28],[54,20],[53,24],[57,23,4],[63,28,3],[69,23,3],[74,28,3],[78,20],[80,22],[82,25],[84,28]
];
const threeEnd = [[86,30,3],[91,20,3],[96,30,3],[99,22],[101,20],[103,16]];

const chords = [];
const STEP = BAR_W / 4;
for (let i = 0; i < 95; i++) chords.push([3 + i * STEP, 19, 6.6]);
for (let i = 0; i < 64; i++) chords.push([227 + i * STEP, 4, 6.6]);
for (let b = 0; b < 24; b++) {
  const x = b * BAR_W;
  chords.push([x, 30, 6], [x + 8, 27, 3], [x + 13, 30, 4], [x + 18, 27, 3], [x + 23, 30, 4]);
}
const fill = [[97,1,3],[103,15,5],[109,21,4],[211,1,3],[217,8,4],[220,15],[222,21],[213,24,4]];
chords.push(...fill, ...shift(fill, 227), [560,1,3],[563,15],[565,21],[559,25],[509,21],[503,25],[674,1,3],[676,15],[673,25],[678,21]);

const eight = [];
[2, 12, 26].forEach(y => eight.push([6, y, 1], [34, y, 1], [56, y, 1]));
[6, 16, 30].forEach(y => eight.push([50, y, 4], [84, y, 1], [88, y, 1], [92, y, 1], [95, y, 1]));
[4, 14, 28].forEach(y => eight.push([98, y, 1], [102, y, 1], [106, y, 1], [110, y, 1]));

const nine = [];
[[0, 9], [14, 9], [28, 2], [42, 2], [57, 5], [71, 5], [85, 2], [99, 2]].forEach(([x, y]) =>
  nine.push([x, y, 1], [x, y + 9, 1], [x, Math.min(y + 21, 30), 1]));

const lead = [[0,7,14],[14,2,5],[19,18,5],[25,20,3],[28,25,14],[42,9,14],[57,14,10],[67,18,3],[71,14,5],[76,18,5],[81,20,3],[85,25,7]];
const ten = [...lead, [92,18,4],[96,14,3],[99,9,14], ...shift(lead, 114), [206,18,7],[213,20,7],[220,30,7],[227,25,28]];

// track clips: start bar, length, name, notes
const tracks = [
  [
    [1, 8, 'Pattern 1', [...melody, [223,2],[225,11]]],
    [9, 8, 'Pattern 1', [...melody, [223,2],[225,11]]],
    [17, 8, 'Pattern 1', [...melody, [223,2],[225,11]]],
    [25, 8, 'Pattern 3', [...three, ...threeEnd, [105,9],[107,13],[109,16],[111,19],[113,20],
      ...shift(three, 113), ...shift(threeEnd, 113), [215,16],[218,9],[220,2,3],[223,5],[225,8]]],
    [33, 8, 'Pattern 2', [...melody, [223,11],[225,9]]],
    [41, 1, '', [[0,18,29]]]
  ],
  [[9, 24, 'Pattern 4', chords]],
  [],
  [
    [17, 4, 'Pattern 8', eight], [21, 4, 'Pattern 8', eight],
    [25, 4, 'Pattern 9', nine], [29, 4, 'Pattern 9', nine],
    [33, 4, 'Pattern 8', eight], [37, 4, 'Pattern 8', eight]
  ],
  [[25, 9, 'Pattern 10', ten]]
];
for (let b = 1; b <= 40; b++) {
  const dense = (b >= 8 && b < 33) || b === 40;
  tracks[2].push([b, 1, '', (dense ? [0, 7, 14, 21] : [0, 14]).map(x => [x, 30, 1]), 'faint']);
}

function clipHtml([start, len, name, notes, cls]) {
  const rects = notes.map(([x, y, w = 2, h = 2]) => `<rect x="${x}" y="${y}" width="${w}" height="${h}"/>`).join('');
  return `<div class="clip" style="left:${(start - 1) / BARS * 100}%;width:${len / BARS * 100}%">
    <header><svg><use href="#i-clip"/></svg>${name}</header>
    <svg class="notes ${cls || ''}" viewBox="0 0 ${len * BAR_W} 32" preserveAspectRatio="none">${rects}</svg>
  </div>`;
}

let bars = '', ruler = '';
for (let b = 1; b <= 63; b++) {
  bars += `<i class="${Math.floor((b - 1) / 4) % 2 ? 'alt' : ''}"></i>`;
  ruler += `<span class="${b % 4 === 1 && b > 1 ? 'major' : ''}">${b}</span>`;
}
document.getElementById('bars').innerHTML = bars;
document.getElementById('ruler').innerHTML = ruler;

let heads = '', lanes = '';
for (let t = 1; t <= 20; t++) {
  const clips = tracks[t - 1] || [];
  heads += `<li class="${clips.length ? 'used' : ''}"><span>Track ${t}</span><small>...</small><i class="led"></i></li>`;
  lanes += `<div class="lane">${clips.map(clipHtml).join('')}</div>`;
}
document.getElementById('heads').innerHTML = heads;
document.getElementById('lanes').insertAdjacentHTML('beforeend', lanes);

// miniature of the song in the scroll bar
document.getElementById('overview').innerHTML = tracks.map((clips, t) => clips.map(([start, len]) =>
  `<rect x="${(start - 1) * 30.3}" y="${1 + t * 3}" width="${len * 30.3 - 1}" height="1" fill="#65717a"/>`).join('')).join('');
```
